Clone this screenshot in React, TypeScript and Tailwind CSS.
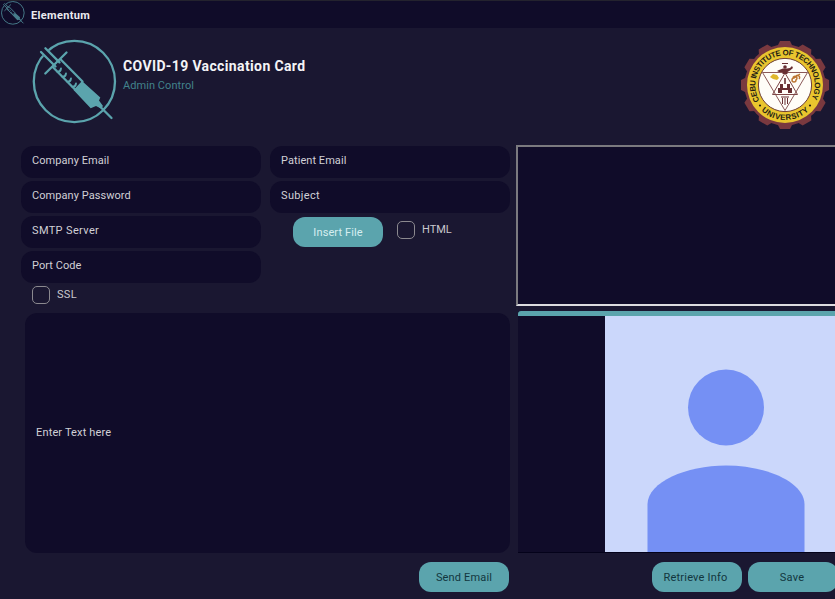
import React from 'react';

function Syringe({ className, weight = 2.3 }: { className: string; weight?: number }) {
  return (
    <svg viewBox="0 0 86 86" className={className} fill="none" stroke="#5ba4ad">
      <circle cx="42.4" cy="42.5" r="40.6" strokeWidth={weight} />
      <path d="M10.5 10.5 L25 25" stroke="#1a1731" strokeWidth="8" />
      <g strokeWidth={weight} strokeLinecap="round">
        <path d="M9 13 L23.500 27.500 M13.400 9.300 L27.500 23.400" />
        <path d="M34.500 13.500 L13.300 34.500" />
        <path d="M20.500 27.800 L43 50.500 M28.500 20.300 L50.500 42.500" />
        <path d="M25.500 33 Q28.500 33 29 29.500 M30.500 38 Q33.500 38 34 34.500 M35.500 43 Q38.500 43 39 39.500 M40.500 48 Q43.500 48 44 44.500" strokeWidth={weight * 0.8} />
        <path d="M68 67.500 L79.500 79" />
      </g>
      <path d="M41.500 51 L50 42 L68.300 58.500 L67 61.500 L71 67 L69 69.500 L64 67 L58.700 69.300 Z" fill="#5ba4ad" stroke="none" />
    </svg>
  );
}

const teeth = [0, 30, 60, 90, 120, 150, 180, 210, 240, 270, 300, 330];

function Seal() {
  return (
    <svg viewBox="-45 -45 90 90" className="h-[90px] w-[90px] shrink-0">
      <defs>
        <path id="ringTop" d="M-25.300 15.500 A29.700 29.700 0 1 1 25.300 15.500" />
        <path id="ringBottom" d="M-28 21 A35 35 0 0 0 28 21" />
      </defs>
      <g fill="#7a393f">
        <circle r="40.5" />
        {teeth.map((a) => (
          <path key={a} d="M-8 -38 L-5 -44 L5 -44 L8 -38 Z" transform={`rotate(${a})`} />
        ))}
      </g>
      <circle r="38" fill="#e9c52e" />
      <circle r="26.6" fill="#fffdf8" stroke="#6d3d36" strokeWidth="1" />
      <g fontFamily="Liberation Sans, Arial, sans-serif" fontWeight="700" fontSize="7.9" fill="#241d14">
        <text textLength="123" lengthAdjust="spacing">
          <textPath href="#ringTop" startOffset="0" textLength="123" lengthAdjust="spacing">CEBU INSTITUTE OF TECHNOLOGY</textPath>
        </text>
        <text textLength="52" lengthAdjust="spacing">
          <textPath href="#ringBottom" startOffset="6.5" textLength="52" lengthAdjust="spacing">UNIVERSITY</textPath>
        </text>
      </g>
      <circle cx="-25" cy="20.500" r="1.1" fill="#241d14" />
      <circle cx="25" cy="20.500" r="1.1" fill="#241d14" />
      <g fill="none" stroke="#7d4646" strokeWidth="1">
        <path d="M-22.500 -12.500 H22.500 L0 25.500 Z" strokeWidth=".9" />
        <path d="M0 -12 L-12.500 9.500 H12.500 Z" />
      </g>
      <g fill="#682f32">
        <path d="M-3 -22 H3 V-21 H-3 Z" />
        <circle cy="-18" r="1.8" />
        <path d="M-8 -14 L-6 -15 L-2 -16.500 H2 L5 -17 L7 -19 L8 -17 L5 -14.500 L2.500 -13 V-11 H-2.500 V-13 L-6 -13 Z" />
        <path d="M-7 8 V3 H-5 V-1 H-2 V3 H2 V-1 H5 V3 H7 V8 H3 V5 H-3 V8 Z" />
        <rect x="-.8" y="-7" width="1.6" height="6" />
        <path d="M-4 11.500 H4 V12.500 H-4 Z M-3 13 H-2 V19 H-3 Z M-.500 13 H.500 V20 H-.500 Z M2 13 H3 V19 H2 Z" />
      </g>
      <path d="M-15 -8 L-12 -11 L-8 -10 L-6 -7 L-8 -5 L-12 -6 Z" fill="#dfb72b" />
      <path d="M8 -7 a2 2 0 1 1 3 2 a2 2 0 1 1 -2 -2 L15 -11 M11 -9 a2 2 0 1 1 3 3" fill="none" stroke="#bd7632" strokeWidth="1.5" />
    </svg>
  );
}

function Field({ label, spacing = 'tracking-[0.06px]' }: { label: string; spacing?: string }) {
  return (
    <div className="flex h-8 w-[240px] items-center rounded-[12px] bg-[#100c29] pb-[2px] pl-[11px]">
      <span className={`whitespace-nowrap text-[11px] leading-4 text-[#d1d0d6] ${spacing}`}>{label}</span>
    </div>
  );
}

function Button({ label, className = 'tracking-[0.15px] text-[#12363e]' }: { label: string; className?: string }) {
  return (
    <button className={`h-[30px] w-[90px] shrink-0 whitespace-nowrap rounded-[12px] bg-[#5ba4ad] pt-[2px] text-[11px] ${className}`}>
      {label}
    </button>
  );
}

function Check({ label, className }: { label: string; className: string }) {
  return (
    <label className="flex h-[18px] items-center gap-[7px]">
      <span className="h-[18px] w-[18px] rounded-[5px] border border-[#8b898f]" />
      <span className={`whitespace-nowrap text-[11px] leading-4 text-[#c9c8ce] ${className}`}>{label}</span>
    </label>
  );
}

export default function App() {
  return (
    <div className="flex h-[599px] w-[835px] flex-col overflow-hidden bg-[#1a1731] font-['Roboto','Liberation_Sans',sans-serif]">
      <header className="flex h-7 shrink-0 items-start border-t border-[#24232e] bg-[#100c29] pl-px">
        <Syringe className="h-6 w-6 opacity-75" weight={3.4} />
        <span className="ml-[6px] mt-[7px] text-[11px] font-bold leading-4 tracking-[0.35px] text-[#ecebef]">Elementum</span>
      </header>

      <section className="flex h-[117px] shrink-0 items-start pl-8 pr-[5px]">
        <Syringe className="mt-[11px] h-[86px] w-[86px] shrink-0" />
        <div className="ml-[5px] mt-7">
          <h1 className="whitespace-nowrap text-[14px] font-bold leading-5 tracking-[0.37px] text-[#f4f4f6]">COVID-19 Vaccination Card</h1>
          <p className="mt-px text-[11px] leading-[18px] tracking-[0.06px] text-[#42838c]">Admin Control</p>
        </div>
        <div className="ml-auto mt-3">
          <Seal />
        </div>
      </section>

      <main className="flex h-[454px] shrink-0">
        <div className="w-[516px] shrink-0">
          <div className="flex h-[167.500px] gap-[9px] pl-[21px]">
            <div className="flex flex-col gap-[3px] pt-[.5px]">
              <Field label="Company Email" />
              <Field label="Company Password" />
              <Field label="SMTP Server" spacing="tracking-[0.36px]" />
              <Field label="Port Code" />
              <div className="pl-[11px]">
                <Check label="SSL" className="tracking-[0.3px]" />
              </div>
            </div>
            <div className="flex flex-col gap-[3px] pt-[.5px]">
              <Field label="Patient Email" />
              <Field label="Subject" spacing="tracking-[0.35px]" />
              <div className="flex items-start gap-[14px] pl-[23px] pt-[1.500px]">
                <Button label="Insert File" className="tracking-[0.1px] text-[#d6eef0]" />
                <div className="pt-1">
                  <Check label="HTML" className="-mt-px" />
                </div>
              </div>
            </div>
          </div>
          <div className="ml-[25px] flex h-[240.500px] w-[485px] items-center rounded-[12px] bg-[#100c29] pl-[11px]">
            <span className="text-[11px] tracking-[0.15px] text-[#d1d0d6]">Enter Text here</span>
          </div>
          <div className="flex justify-end pr-[7px] pt-[9px]">
            <Button label="Send Email" />
          </div>
        </div>

        <div className="w-[319px] shrink-0 overflow-hidden">
          <div className="h-[161px] border-b-2 border-l-2 border-t-2 border-b-[#dddce0] border-l-[#7b7a7f] border-t-[#7b7a7f] bg-[#100c29]" />
          <div className="ml-[2px] mt-[5px] flex h-[242px] flex-col border-b border-[#04021a] bg-[#100c29]">
            <div className="h-[5px] shrink-0 rounded-tl-[3px] bg-[#5ba4ad]" />
            <svg viewBox="0 0 230 236" className="ml-[87px] h-[236px] w-[230px] shrink-0 bg-[#cbd7fb]">
              <circle cx="121" cy="91.500" r="38" fill="#7590f4" />
              <path d="M42.500 236 V188 C43 166 81 149.500 121 149.500 C161 149.500 199 166 199.500 188 V236 Z" fill="#7590f4" />
            </svg>
          </div>
          <div className="ml-[136px] flex gap-[6px] pt-[9px]">
            <Button label="Retrieve Info" className="pr-[3px] tracking-[0.2px] text-[#12363e]" />
            <Button label="Save" className="pr-[2px] tracking-[0.3px] text-[#12363e]" />
          </div>
        </div>
      </main>
    </div>
  );
}
